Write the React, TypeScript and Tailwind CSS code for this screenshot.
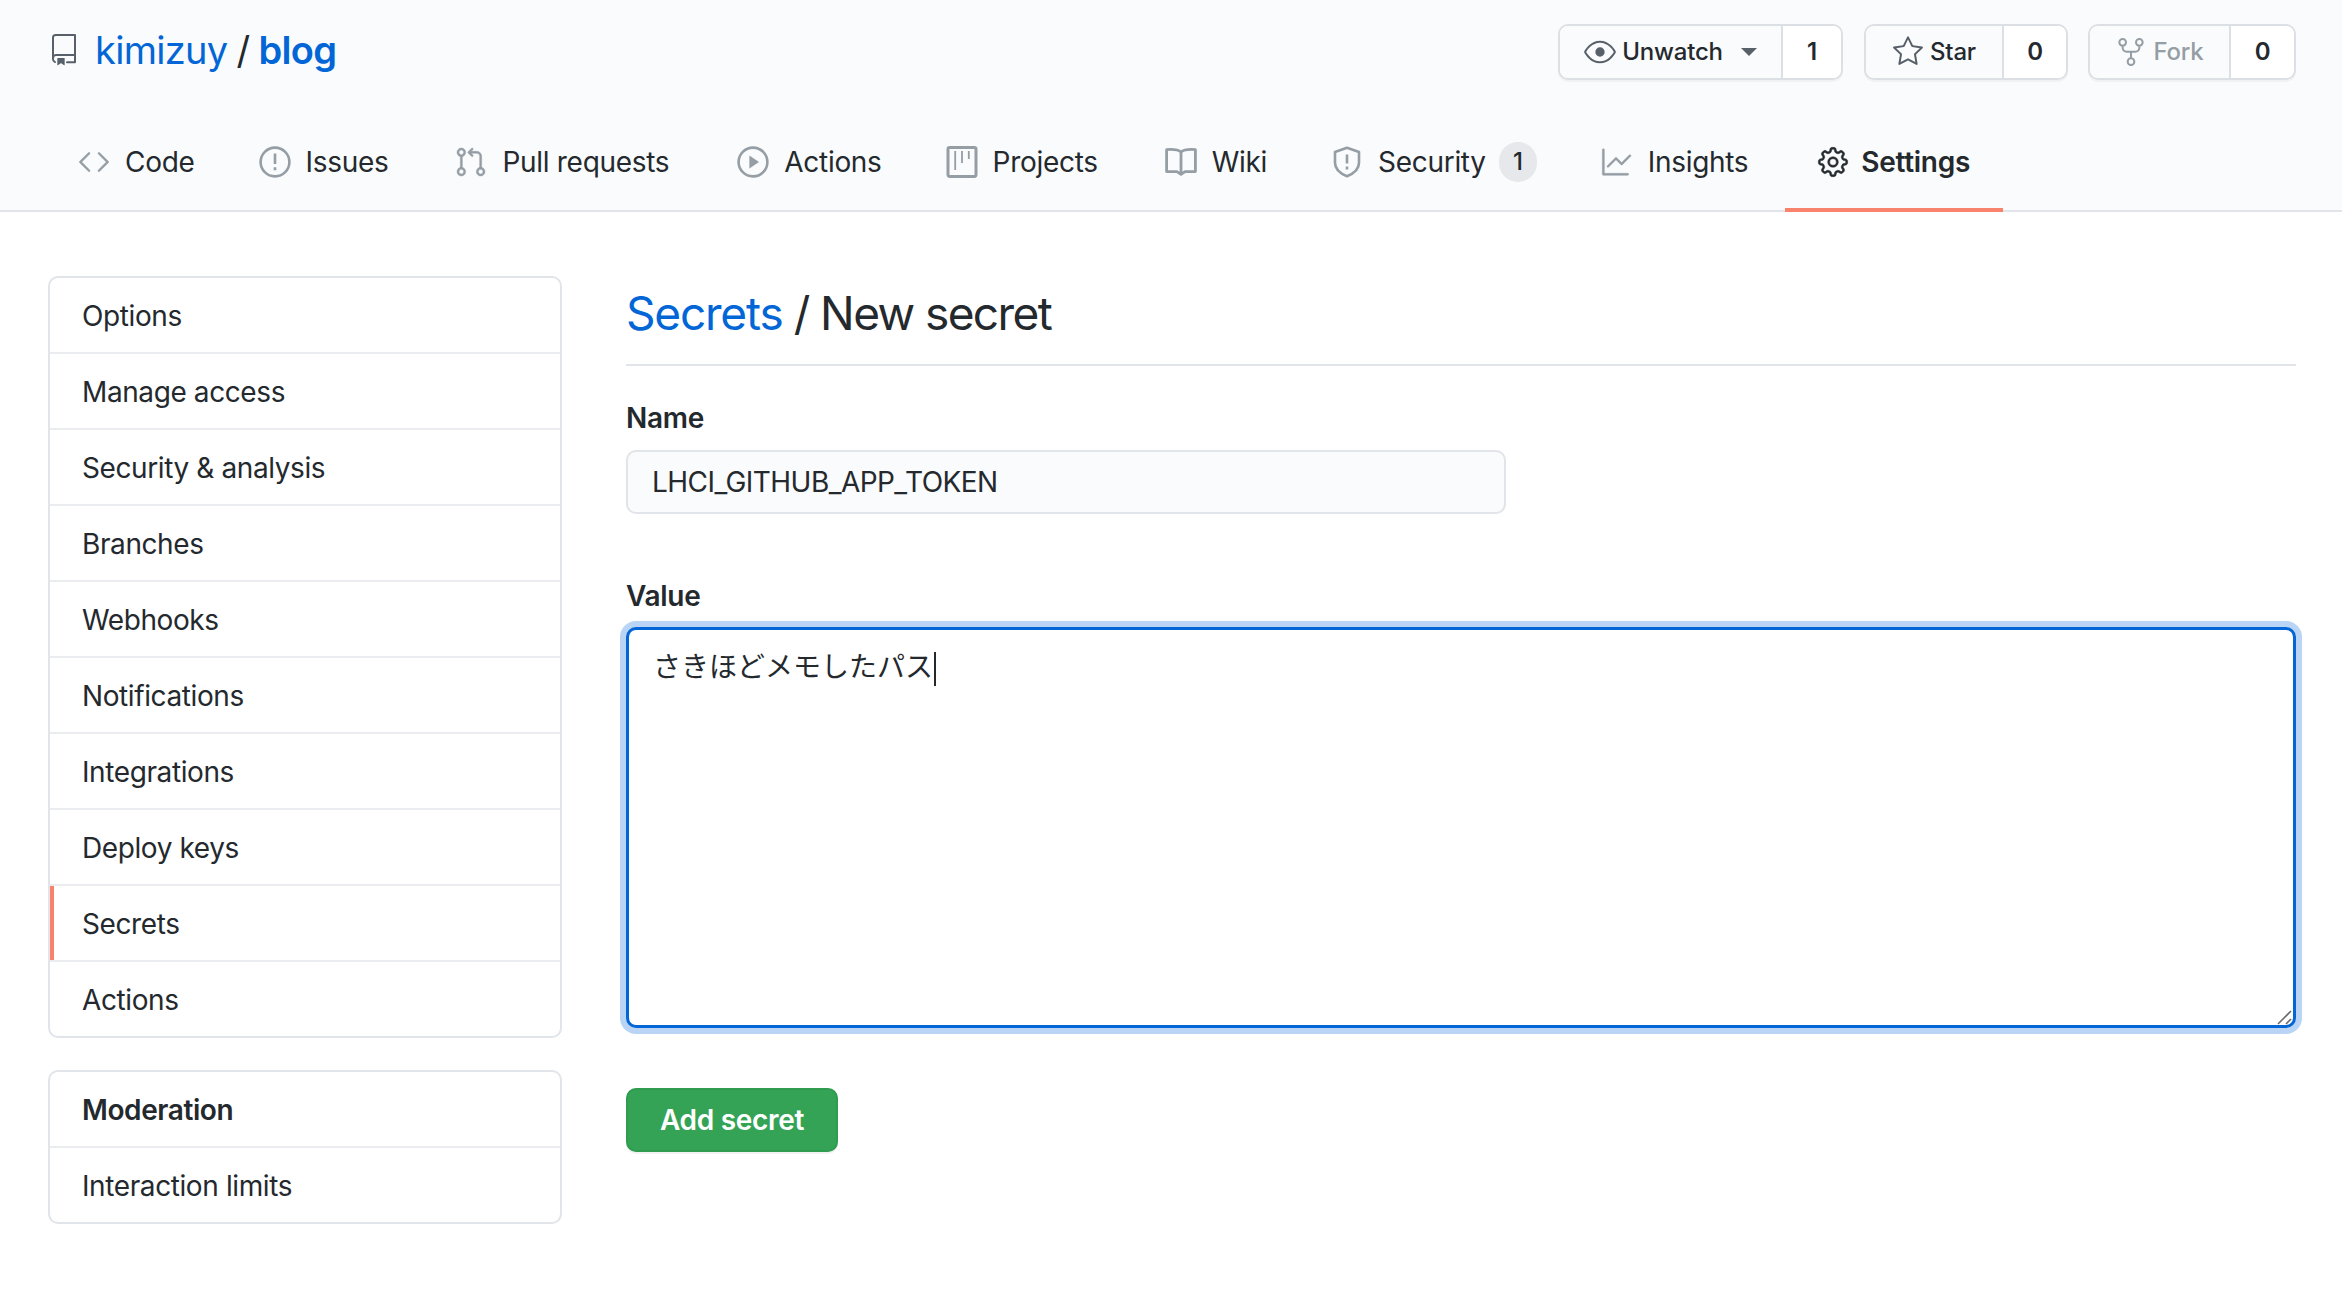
import type { ReactNode } from 'react';
import { GoCode, GoEye, GoGear, GoGitPullRequest, GoGraph, GoRepo, GoRepoForked, GoStar } from 'react-icons/go';

const FONT = "font-['Inter','Noto_Sans_CJK_JP',sans-serif]";

function IssueIcon() {
  return (
    <svg viewBox="0 0 16 16" className="block h-[32px] w-[32px]" fill="none" stroke="currentColor" strokeWidth="1.3">
      <circle cx="8" cy="8" r="7.2" />
      <path d="M8 3.8v5.2M8 10.6v1.5" />
    </svg>
  );
}

function PlayIcon() {
  return (
    <svg viewBox="0 0 16 16" className="block h-[32px] w-[32px]" fill="none" stroke="currentColor" strokeWidth="1.3">
      <circle cx="8" cy="8" r="7.2" />
      <path d="M6.2 4.8L11 8l-4.8 3.2z" fill="currentColor" stroke="none" />
    </svg>
  );
}

function ProjectIcon() {
  return (
    <svg viewBox="0 0 16 16" className="block h-[32px] w-[32px]" fill="none" stroke="currentColor">
      <rect x="1" y="0.8" width="14" height="14.4" rx="0.8" strokeWidth="1.5" />
      <path d="M4.6 2.5v9.5M8 2.5v6M11.4 2.5v4" strokeWidth="0.9" />
    </svg>
  );
}

function BookIcon() {
  return (
    <svg viewBox="0 0 16 16" className="block h-[32px] w-[32px]" fill="none" stroke="currentColor" strokeWidth="1.4">
      <path d="M8 3C6.8 1.9 4 1.6 0.8 1.8v11h5.2L8 14.2l2-1.4h5.2v-11C12 1.6 9.2 1.9 8 3zM8 3v11" strokeLinejoin="round" />
    </svg>
  );
}

function ShieldIcon() {
  return (
    <svg viewBox="0 0 16 16" className="block h-[32px] w-[32px]" fill="none" stroke="currentColor" strokeWidth="1.3">
      <path d="M8 0.9l6 2.1v5.4c0 3.2-2.9 5.5-6 6.7-3.1-1.2-6-3.5-6-6.7V3L8 0.9z" strokeLinejoin="round" />
      <path d="M8 4.2v4.6M8 10.2v1.5" />
    </svg>
  );
}

const HEAVY = { size: 32, className: 'block', stroke: 'currentColor', strokeWidth: 0.35 };

const TABS: { label: string; icon: ReactNode; badge?: string; active?: boolean; spacing?: string }[] = [
  { label: 'Code', icon: <GoCode {...HEAVY} /> },
  { label: 'Issues', icon: <IssueIcon /> },
  { label: 'Pull requests', icon: <GoGitPullRequest {...HEAVY} />, spacing: 'ml-[3px]' },
  { label: 'Actions', icon: <PlayIcon />, spacing: 'ml-[4px]' },
  { label: 'Projects', icon: <ProjectIcon /> },
  { label: 'Wiki', icon: <BookIcon />, spacing: 'ml-[3px]' },
  { label: 'Security', icon: <ShieldIcon />, badge: '1' },
  { label: 'Insights', icon: <GoGraph {...HEAVY} /> },
  { label: 'Settings', icon: <GoGear {...HEAVY} />, active: true, spacing: 'ml-[5px]' },
];

const MENU = [
  'Options',
  'Manage access',
  'Security & analysis',
  'Branches',
  'Webhooks',
  'Notifications',
  'Integrations',
  'Deploy keys',
  'Secrets',
  'Actions',
];

function RepoButton({
  icon,
  label,
  count,
  caret,
  muted,
  width,
  countWidth,
}: {
  icon: ReactNode;
  label: string;
  count: string;
  caret?: boolean;
  muted?: boolean;
  width: string;
  countWidth: string;
}) {
  return (
    <div className="flex h-[56px] overflow-hidden rounded-[10px] border-2 border-[#dcdfe3] text-[24px] font-medium leading-none tracking-[-0.2px] shadow-[0_2px_0_rgba(27,31,35,0.04)]">
      <div className={`flex items-center justify-center gap-[6px] bg-[#fafbfc] ${width} ${muted ? 'text-[#959da5]' : 'text-[#24292e]'}`}>
        <span className={muted ? 'text-[#959da5]' : 'text-[#586069]'}>{icon}</span>
        <span>{label}</span>
        {caret && <span className="ml-[12px] h-0 w-0 border-x-[8px] border-t-[8px] border-x-transparent border-t-[#586069]" />}
      </div>
      <div className={`flex items-center justify-center border-l-2 border-[#dcdfe3] bg-white font-semibold text-[#24292e] ${countWidth}`}>{count}</div>
    </div>
  );
}

function MenuBox({ children }: { children: ReactNode }) {
  return <div className="overflow-hidden rounded-[10px] border-2 border-[#e1e4e8] bg-white">{children}</div>;
}

export default function App() {
  return (
    <div className={`${FONT} min-h-[1294px] w-[2342px] bg-white text-[#24292e]`}>
      <header className="h-[212px] border-b-2 border-[#e1e4e8] bg-[#fafbfc]">
        <div className="flex h-[104px] items-start justify-between pl-[48px] pr-[46px] pt-[24px]">
          <h1 className="-mt-[1px] flex h-[54px] items-center text-[38px] leading-none tracking-[-0.7px]">
            <GoRepo size={32} className="mr-[15px] text-[#586069]" />
            <span className="text-[#0366d6]">kimizuy</span>
            <span className="mx-[9px] text-[#24292e]">/</span>
            <span className="font-semibold text-[#0366d6]">blog</span>
          </h1>
          <div className="flex">
            <RepoButton icon={<GoEye size={32} className="block" />} label="Unwatch" caret count="1" width="w-[221px]" countWidth="w-[60px]" />
            <div className="w-[21px]" />
            <RepoButton icon={<GoStar size={32} className="block" />} label="Star" count="0" width="w-[136px]" countWidth="w-[64px]" />
            <div className="w-[20px]" />
            <RepoButton icon={<GoRepoForked size={32} className="block" />} label="Fork" muted count="0" width="w-[139px]" countWidth="w-[65px]" />
          </div>
        </div>
        <nav className="flex h-[106px] items-stretch pl-[46px] text-[28px] tracking-[-0.3px]">
          {TABS.map(tab => (
            <div
              key={tab.label}
              className={`-mb-[2px] flex h-[108px] items-center border-b-4 pl-[32px] pt-[11px] ${tab.spacing ?? ''} ${
                tab.active ? 'gap-[12px] border-[#f9826c] pr-[33px] font-semibold' : 'gap-[15px] border-transparent pr-[32px]'
              }`}
            >
              <span className={tab.active ? 'text-[#24292e]' : 'text-[#959da5]'}>{tab.icon}</span>
              <span>{tab.label}</span>
              {tab.badge && (
                <span className="-ml-[2px] flex h-[40px] w-[38px] items-center justify-center rounded-full bg-[#e6e8eb] text-[24px] font-medium">
                  {tab.badge}
                </span>
              )}
            </div>
          ))}
        </nav>
      </header>

      <main className="flex gap-[64px] pl-[48px] pr-[46px] pt-[64px]">
        <aside className="flex w-[514px] shrink-0 flex-col gap-[32px] text-[28px] tracking-[-0.4px]">
          <MenuBox>
            {MENU.map((item, i) => (
              <div
                key={item}
                className={`flex items-center pl-[32px] pt-[2px] ${i > 0 ? 'h-[76px] border-t-2 border-[#eaecef]' : 'h-[74px]'} ${
                  item === 'Secrets' ? 'shadow-[inset_4px_0_0_#f9826c]' : ''
                }`}
              >
                {item}
              </div>
            ))}
          </MenuBox>
          <MenuBox>
            <div className="flex h-[74px] items-center pl-[32px] pt-[2px] font-semibold">Moderation</div>
            <div className="flex h-[76px] items-center border-t-2 border-[#eaecef] pl-[32px] pt-[2px]">Interaction limits</div>
          </MenuBox>
        </aside>

        <section className="min-w-0 flex-1">
          <h2 className="h-[90px] border-b-2 border-[#e1e4e8] pb-[16px] pt-[7px] text-[46px] leading-[60px] tracking-[-1.6px]">
            <span className="tracking-[-1.2px] text-[#0366d6]">Secrets</span> / New secret
          </h2>

          <label className="mt-[34px] block text-[28px] font-semibold leading-[36px] tracking-[-0.3px]">Name</label>
          <input
            readOnly
            value="LHCI_GITHUB_APP_TOKEN"
            className="mt-[14px] block h-[64px] w-[880px] rounded-[10px] border-2 border-[#e1e4e8] bg-[#fafbfc] px-[24px] text-[28px] tracking-[-0.55px] outline-none"
          />

          <label className="mt-[64px] block text-[28px] font-semibold leading-[36px] tracking-[-0.3px]">Value</label>
          <div className="relative mt-[13px] h-[401px] rounded-[10px] border-[3px] border-[#0366d6] bg-white px-[24px] pb-[20px] pt-[17px] text-[28px] leading-[40px] shadow-[0_0_0_6px_rgba(3,102,214,0.28)]">
            さきほどメモしたパス
            <span className="ml-[1px] inline-block h-[34px] w-[2px] bg-[#24292e] align-middle" />
            <svg viewBox="0 0 16 16" className="absolute bottom-0 right-0 h-[16px] w-[16px]" stroke="#6a6a6a" strokeWidth="1.6">
              <path d="M1 15L14 2M9 15l5-5" />
            </svg>
          </div>

          <button className="mt-[60px] block h-[64px] w-[212px] rounded-[10px] border-2 border-[#2f9c50] bg-[#34a355] text-[28px] font-semibold tracking-[-0.3px] text-white shadow-[0_2px_0_rgba(27,31,35,0.06)]">
            Add secret
          </button>
        </section>
      </main>
    </div>
  );
}
